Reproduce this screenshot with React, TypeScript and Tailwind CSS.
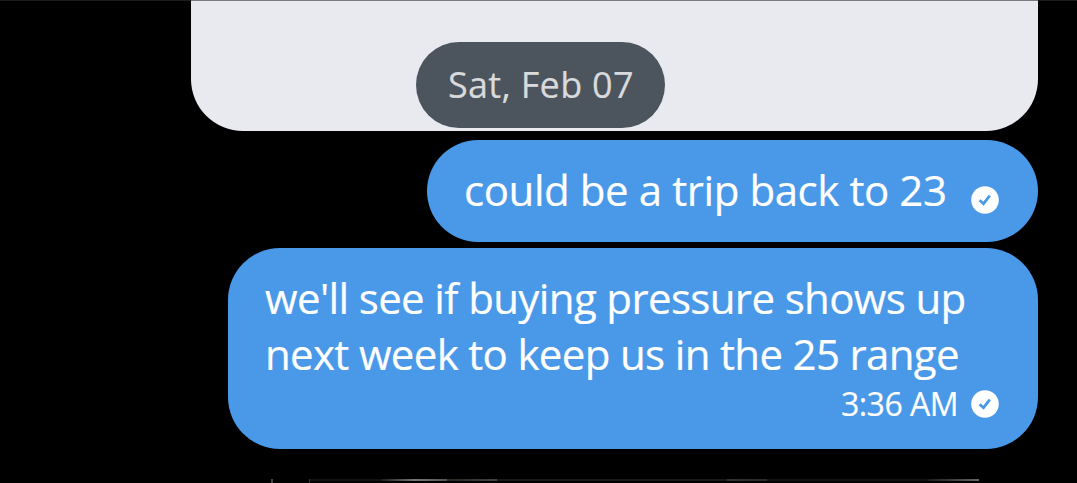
function SentIcon() {
  return (
    <svg viewBox="0 0 28 28" className="size-7 shrink-0">
      <circle cx="14" cy="14" r="13.8" fill="#fff" />
      <path
        d="M8.6 14.2 L12.5 17.7 L18.8 9.6"
        fill="none"
        stroke="#4a99e9"
        strokeWidth="2.7"
      />
    </svg>
  );
}

function DatePill({ label }: { label: string }) {
  return (
    <div className="absolute left-[416px] top-[42px] flex h-[86px] w-[249px] items-center rounded-full bg-[#4c545d] pl-8">
      <span className="whitespace-nowrap text-[36px] leading-[50px] tracking-[0.3px] text-[#d9dadc]">
        {label}
      </span>
    </div>
  );
}

function App() {
  return (
    <main className="relative flex h-[483px] w-[1077px] flex-col items-end overflow-hidden bg-black pr-[39px] font-['Open_Sans','Noto_Sans',sans-serif] text-white [-webkit-text-stroke:0.2px]">
      <div className="h-[131px] w-[847px] shrink-0 rounded-b-[52px] bg-[#e9eaf0]" />

      <div className="mt-[9px] flex h-[102px] w-[611px] shrink-0 items-start justify-between rounded-full bg-[#4a99e9] pl-[37px] pr-[39px] pt-[22px]">
        <p className="whitespace-nowrap text-[42px] leading-[56px] tracking-[-0.42px]">
          could be a trip back to 23
        </p>
        <div className="mt-6">
          <SentIcon />
        </div>
      </div>

      <div className="mt-1.5 h-[201px] w-[810px] shrink-0 rounded-[52px] bg-[#4a99e9] pl-[37px] pr-[39px] pt-[22px]">
        <p className="whitespace-nowrap text-[42px] leading-[56px]">
          <span className="block tracking-[-0.62px]">
            we'll see if buying pressure shows up
          </span>
          <span className="block tracking-[-0.66px]">
            next week to keep us in the 25 range
          </span>
        </p>
        <div className="flex items-center justify-end gap-[13px] pt-0.5">
          <span className="text-[32px] leading-10 tracking-[-0.5px]">
            3:36 AM
          </span>
          <SentIcon />
        </div>
      </div>

      {/* top edge of the next attachment */}
      <div className="mt-[30px] flex h-1 w-[810px] shrink-0">
        <div className="ml-[43px] h-1 w-0.5 bg-[#444]" />
        <div className="ml-9 h-1 w-px bg-[#333]" />
        <div className="h-0.5 w-[72px] bg-[#111]" />
        <div className="h-0.5 w-[65px] bg-linear-to-r from-[#222] via-[#777] to-[#555]" />
        <div className="h-0.5 w-[50px] bg-linear-to-r from-[#2c2520] to-[#444]" />
        <div className="h-0.5 w-[230px] bg-[#181818]" />
        <div className="h-0.5 w-10 bg-linear-to-r from-[#333] to-[#2a2a2a]" />
        <div className="h-0.5 w-[160px] bg-[#121212]" />
        <div className="h-0.5 w-[52px] bg-linear-to-r from-[#1c1c1c] to-[#666]" />
      </div>

      <DatePill label="Sat, Feb 07" />
      <div className="absolute inset-x-0 top-0 h-px bg-[#2f2f33]/60" />
    </main>
  );
}

export default App;
